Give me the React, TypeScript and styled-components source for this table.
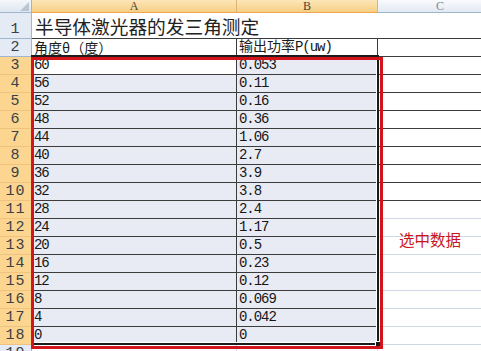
import React from 'react'
import styled, { createGlobalStyle } from 'styled-components'

const GlobalStyle = createGlobalStyle`
  html, body {
    margin: 0;
    padding: 0;
    background: #fff;
    overflow: hidden;
  }
`

const colA = ['60', '56', '52', '48', '44', '40', '36', '32', '28', '24', '20', '16', '12', '8', '4', '0']
const colB = ['0.053', '0.11', '0.16', '0.36', '1.06', '2.7', '3.9', '3.8', '2.4', '1.17', '0.5', '0.23', '0.12', '0.069', '0.042', '0']

const INK = '#3c3c3c'
const GRID = '#d0d7e5'

const Sheet = styled.div`
  position: relative;
  width: 481px;
  height: 351px;
  overflow: hidden;
  background: #fff;
`

const Grid = styled.div`
  display: grid;
  grid-template-columns: 32px 205px 141px 125px;
  grid-template-rows: 13px 26px 18px repeat(17, 18px);
`

const Corner = styled.div`
  position: relative;
  background: linear-gradient(#f4f7fb, #dfe6f0);
  border-right: 1px solid #9eb6ce;
  border-bottom: 1px solid #9eb6ce;
  box-sizing: border-box;

  &::after {
    content: '';
    position: absolute;
    right: 2px;
    bottom: 1px;
    border-left: 9px solid transparent;
    border-bottom: 9px solid #b9c5d4;
  }
`

const ColHead = styled.div<{ $on?: boolean }>`
  display: flex;
  align-items: center;
  justify-content: center;
  box-sizing: border-box;
  font: 12px 'Liberation Serif', serif;
  line-height: 1;
  color: ${(p) => (p.$on ? '#4a4536' : '#7a8aa0')};
  background: ${(p) => (p.$on ? 'linear-gradient(#fde6b8, #f7cf85)' : 'linear-gradient(#f8fafd, #e3e9f2)')};
  border-right: 1px solid ${(p) => (p.$on ? '#d9b57a' : '#c5d1de')};
  border-bottom: 1px solid ${(p) => (p.$on ? '#f1a64b' : '#9eb6ce')};
`

const RowHead = styled.div<{ $on?: boolean }>`
  display: flex;
  align-items: flex-end;
  justify-content: center;
  box-sizing: border-box;
  font: 15px 'Liberation Mono', monospace;
  letter-spacing: 1px;
  line-height: 16px;
  color: #3a3f48;
  background: ${(p) => (p.$on ? '#fcd690' : '#e4ebf5')};
  border-right: 1px solid #9eb6ce;
  border-bottom: 1px solid ${(p) => (p.$on ? '#efc27e' : '#9eb6ce')};
`

const Cell = styled.div<{ $fill?: string; $bottom?: string; $right?: string }>`
  display: flex;
  align-items: flex-end;
  box-sizing: border-box;
  padding: 0 2px 1px;
  white-space: nowrap;
  background: ${(p) => p.$fill ?? '#fff'};
  border-bottom: 1px solid ${(p) => p.$bottom ?? GRID};
  border-right: 1px solid ${(p) => p.$right ?? GRID};
`

const TitleCell = styled.div`
  grid-column: span 3;
  display: flex;
  align-items: flex-end;
  box-sizing: border-box;
  padding: 0 0 1px 3px;
  font: 18.7px 'Noto Sans CJK SC', sans-serif;
  line-height: 22px;
  color: #222;
  white-space: nowrap;
  border-bottom: 1px solid ${INK};
`

const Label = styled.span`
  font: 14px 'Noto Sans CJK SC', sans-serif;
  line-height: 16px;
  color: #1c1c1c;
`

const Num = styled.span`
  font: 14px 'Liberation Mono', monospace;
  letter-spacing: -1.05px;
  line-height: 15px;
  color: #161616;
`

const Selection = styled.div`
  position: absolute;
  left: 31px;
  top: 55px;
  width: 348px;
  height: 290px;
  box-sizing: border-box;
  border: 2px solid #1b1b1b;
  box-shadow: inset 0 0 0 1px #fff;

  &::after {
    content: '';
    position: absolute;
    right: -4px;
    bottom: -4px;
    width: 4px;
    height: 4px;
    background: #1b1b1b;
    border: 1px solid #fff;
  }
`

const Marker = styled.div`
  position: absolute;
  left: 31px;
  top: 57px;
  width: 352px;
  height: 292px;
  box-sizing: border-box;
  border: 3px solid #d3141c;
`

const Note = styled.div`
  position: absolute;
  left: 399px;
  top: 228px;
  font: 15.5px 'Noto Sans CJK SC', sans-serif;
  color: #c9161e;
  white-space: nowrap;
`

export default function App() {
  return (
    <>
      <GlobalStyle />
      <Sheet>
        <Grid>
          <Corner />
          <ColHead $on>A</ColHead>
          <ColHead $on>B</ColHead>
          <ColHead>C</ColHead>

          <RowHead>1</RowHead>
          <TitleCell>半导体激光器的发三角测定</TitleCell>

          <RowHead>2</RowHead>
          <Cell $bottom={INK} $right={INK}>
            <Label>角度θ（度）</Label>
          </Cell>
          <Cell $bottom={INK} $right={INK}>
            <Label>
              输出功率<Num>P(uw)</Num>
            </Label>
          </Cell>
          <Cell $bottom={INK} />

          {colA.map((a, i) => {
            const row = i + 3
            return (
              <React.Fragment key={row}>
                <RowHead $on>{row}</RowHead>
                <Cell $fill={i === 0 ? '#fff' : '#e9ebf4'} $bottom={INK} $right={INK}>
                  <Num>{a}</Num>
                </Cell>
                <Cell $fill="#e9ebf4" $bottom={INK} $right={INK}>
                  <Num>{colB[i]}</Num>
                </Cell>
                <Cell $bottom={row <= 10 ? INK : GRID} />
              </React.Fragment>
            )
          })}

          <RowHead>19</RowHead>
          <Cell />
          <Cell />
          <Cell />
        </Grid>
        <Selection />
        <Marker />
        <Note>选中数据</Note>
      </Sheet>
    </>
  )
}
